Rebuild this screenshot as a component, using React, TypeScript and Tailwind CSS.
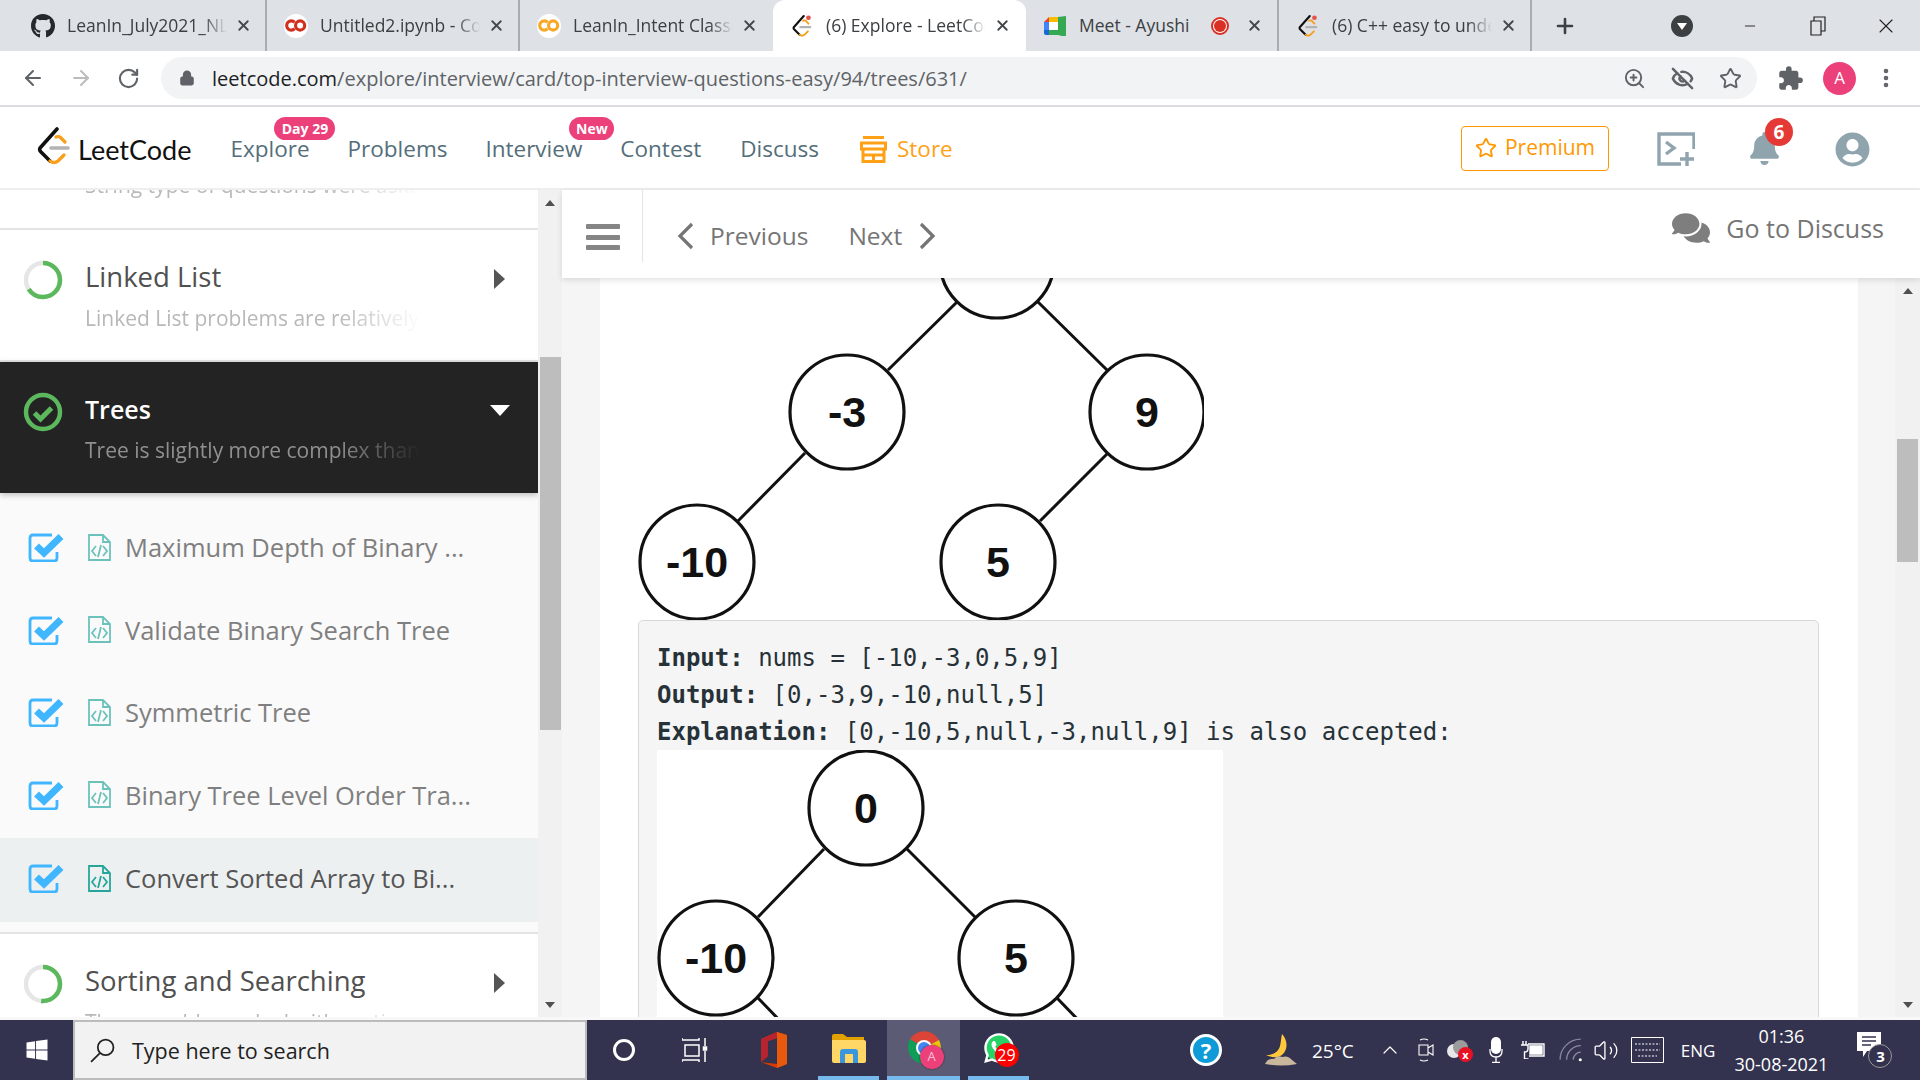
import { ArrowLeft, ArrowRight, ChevronUp, EyeOff, Lock, Minus, MoreVertical, Plus, RotateCw, Star, Volume2, X, ZoomIn } from "lucide-react";
import { FaBell, FaComments, FaGithub, FaUserCircle, FaWhatsapp, FaWindows } from "react-icons/fa";
import { MdExtension } from "react-icons/md";

const sans = "font-['Open_Sans',sans-serif]";

function LeetLogo({ small }: { small?: boolean }) {
  return (
    <svg viewBox="0 0 34 38" className={small ? "h-[24px] w-[20px] shrink-0" : "h-[38px] w-[34px] shrink-0"} fill="none" strokeLinecap="round" strokeLinejoin="round">
      <path d="M20 2 3 21q-1 2 1 4l9 9" stroke="#111" strokeWidth="3.6" />
      <path d="M19 10q2-1 4 0l5 5" stroke="#f89f1b" strokeWidth="3.2" />
      <path d="M13 34q4 3 8 0l6-6" stroke="#f89f1b" strokeWidth="3.2" />
      <path d="M14 21h17" stroke="#b3b3b3" strokeWidth="3.6" />
      {small && <circle cx="28" cy="5" r="4" fill="#e5534b" />}
    </svg>
  );
}

function ColabIcon({ color }: { color: string }) {
  return (
    <span className="flex h-[24px] w-[24px] shrink-0 items-center justify-center rounded-full bg-white">
      <svg viewBox="0 0 24 14" className="h-[13px] w-[22px]" fill="none" stroke={color} strokeWidth="3.4">
        <path d="M10.5 3.6a5 5 0 1 0 0 6.8" />
        <circle cx="16.5" cy="7" r="5" />
      </svg>
    </span>
  );
}

function MeetIcon() {
  return (
    <svg viewBox="0 0 24 20" className="h-[20px] w-[24px] shrink-0">
      <path d="M1 6 6 1v5z" fill="#ea4335" />
      <path d="M6 1h9v5H6z" fill="#fbbc04" />
      <path d="M1 6h5v8H1z" fill="#4285f4" />
      <path d="M1 14h5v5H3q-2 0-2-2z" fill="#1967d2" />
      <path d="M6 14h9v5H6z" fill="#34a853" />
      <path d="M15 1v18l8 2V0z" fill="#34a853" />
      <path d="M6 6h9v8H6z" fill="#fff" />
    </svg>
  );
}

type TabProps = { icon: React.ReactNode; title: string; active?: boolean; sep?: boolean; rec?: boolean };

function Tab({ icon, title, active, sep, rec }: TabProps) {
  return (
    <div className={`flex h-[51px] w-[253px] shrink-0 items-center pl-[17px] ${active ? "rounded-t-[12px] bg-white" : ""} ${sep ? "border-r-2 border-r-[#a9acb1]" : ""}`}>
      <span className="flex w-[24px] justify-center">{icon}</span>
      <span className={`ml-[12px] overflow-hidden whitespace-nowrap text-[17.5px] text-[#3c4043] ${rec ? "w-[116px]" : "w-[160px] [mask-image:linear-gradient(to_right,black_85%,transparent)]"}`}>{title}</span>
      {rec && (
        <span className="ml-[16px] flex h-[18px] w-[18px] items-center justify-center rounded-full border-2 border-[#d93025] bg-white">
          <span className="h-[12px] w-[12px] rounded-full bg-[#d93025]" />
        </span>
      )}
      <X size={17} strokeWidth={2.6} className={`${rec ? "ml-[17px]" : "ml-[8px]"} shrink-0 text-[#44474b]`} />
    </div>
  );
}

function TabStrip() {
  return (
    <div className="flex h-[51px] items-center bg-[#dee1e6] pl-[14px]">
      <Tab icon={<FaGithub size={26} className="text-[#24292e]" />} title="LeanIn_July2021_NL" sep />
      <Tab icon={<ColabIcon color="#d32f1e" />} title="Untitled2.ipynb - Colab" sep />
      <Tab icon={<ColabIcon color="#f9a825" />} title="LeanIn_Intent Classification" />
      <Tab icon={<LeetLogo small />} title="(6) Explore - LeetCode" active />
      <Tab icon={<MeetIcon />} title="Meet - Ayushi" sep rec />
      <Tab icon={<LeetLogo small />} title="(6) C++ easy to understand" sep />
      <Plus size={24} strokeWidth={2.6} className="ml-[21px] text-[#3c4043]" />
      <span className="ml-[94px] flex h-[22px] w-[22px] items-center justify-center rounded-full bg-[#3c4043]">
        <span className="mt-[2px] border-x-[5px] border-t-[7px] border-x-transparent border-t-white" />
      </span>
      <Minus size={16} strokeWidth={1.4} className="ml-[49px] text-[#222]" />
      <svg viewBox="0 0 16 20" className="ml-[52px] h-[20px] w-[16px]" fill="none" stroke="#222" strokeWidth="1.2">
        <path d="M1 5h10v14H1z" />
        <path d="M4 5V1h11v14h-4" />
      </svg>
      <X size={24} strokeWidth={1.1} className="ml-[48px] text-[#222]" />
    </div>
  );
}

function AddressBar() {
  return (
    <div className="flex h-[56px] items-center border-b-2 border-b-[#dadce0] bg-white">
      <ArrowLeft size={24} strokeWidth={2} className="ml-[21px] text-[#5f6368]" />
      <ArrowRight size={24} strokeWidth={2} className="ml-[24px] text-[#babcbe]" />
      <RotateCw size={23} strokeWidth={2.2} className="ml-[24px] text-[#5f6368]" />
      <div className="ml-[21px] flex h-[42px] w-[1596px] items-center rounded-full bg-[#f1f3f4]">
        <Lock size={16} fill="#5f6368" strokeWidth={2.4} className="ml-[18px] text-[#5f6368]" />
        <span className="ml-[17px] mt-[1px] whitespace-nowrap text-[20px] text-[#5f6368]">
          <span className="text-[#202124]">leetcode.com</span>/explore/interview/card/top-interview-questions-easy/94/trees/631/
        </span>
        <ZoomIn size={23} strokeWidth={2} className="ml-auto text-[#5f6368]" />
        <EyeOff size={23} strokeWidth={2.6} className="ml-[25px] text-[#5f6368]" />
        <Star size={23} strokeWidth={2} className="ml-[25px] mr-[15px] text-[#5f6368]" />
      </div>
      <MdExtension size={27} className="ml-[20px] text-[#5f6368]" />
      <span className="ml-[19px] flex h-[33px] w-[33px] items-center justify-center rounded-full bg-[#ec407a] text-[17px] text-white">A</span>
      <MoreVertical size={24} strokeWidth={2.6} className="ml-[18px] text-[#5f6368]" />
    </div>
  );
}

function NavLink({ label, className, badge, badgeClass }: { label: string; className: string; badge?: string; badgeClass?: string }) {
  return (
    <span className={`relative text-[22.5px] text-[#546e7a] ${className}`}>
      {label}
      {badge && (
        <span className={`absolute top-[-15px] flex h-[23px] items-center justify-center rounded-full bg-[#ec407a] text-[14px] font-bold text-white ${badgeClass}`}>{badge}</span>
      )}
    </span>
  );
}

function StoreIcon() {
  return (
    <svg viewBox="0 0 27 28" className="ml-[41px] h-[28px] w-[27px]" fill="none" stroke="#ffa116" strokeWidth="3">
      <path d="M3 2.500h21" />
      <path d="M1.500 8h24v6h-24zM3 14v12.500h21V14M3 20h21M13.500 20v6" />
    </svg>
  );
}

function TopNav() {
  return (
    <div className="flex h-[83px] items-center border-b-2 border-b-[#eeeeee] bg-white pt-[3px]">
      <span className="mb-[6px] ml-[37px]"><LeetLogo /></span>
      <span className="ml-[7px] font-['Lato',sans-serif] text-[27px] leading-none text-[#111]">LeetCode</span>
      <NavLink label="Explore" className="ml-[39px]" badge="Day 29" badgeClass="left-[44px] w-[61px]" />
      <NavLink label="Problems" className="ml-[38px]" />
      <NavLink label="Interview" className="ml-[38px]" badge="New" badgeClass="left-[84px] w-[45px]" />
      <NavLink label="Contest" className="ml-[38px]" />
      <NavLink label="Discuss" className="ml-[39px]" />
      <StoreIcon />
      <span className="ml-[10px] text-[22.5px] text-[#ffa116]">Store</span>
      <div className="-mt-[2px] ml-auto flex h-[45px] w-[148px] items-center justify-center gap-[8px] rounded-[4px] border border-[#ff9800] text-[21px] text-[#ff9800]">
        <Star size={22} strokeWidth={2} />
        Premium
      </div>
      <svg viewBox="0 0 38 34" className="ml-[48px] h-[34px] w-[38px]" fill="none" stroke="#90a4ae" strokeWidth="3.4">
        <path d="M37 17V2H2v30h22" />
        <path d="m9 10 8 6-8 6M30 20v14M23 27h14" />
      </svg>
      <div className="relative ml-[53px] h-[34px] w-[30px]">
        <FaBell size={33} className="text-[#90a4ae]" />
        <span className="absolute left-[17px] top-[-14px] flex h-[28px] w-[28px] items-center justify-center rounded-full bg-[#e53935] text-[19px] font-bold leading-none text-white">6</span>
      </div>
      <FaUserCircle size={35} className="ml-[57px] mr-[50px] text-[#90a4ae]" />
    </div>
  );
}

function Ring({ dash }: { dash: number }) {
  return (
    <svg viewBox="0 0 40 40" className="h-[40px] w-[40px] shrink-0" fill="none" strokeWidth="4.5">
      <circle cx="20" cy="20" r="17" stroke="#e6e6e6" />
      <circle cx="20" cy="20" r="17" stroke="#5cb85c" strokeDasharray={`${dash} 200`} transform="rotate(-90 20 20)" />
    </svg>
  );
}

function DoneRing() {
  return (
    <svg viewBox="0 0 40 40" className="h-[40px] w-[40px] shrink-0" fill="none" stroke="#5cb85c">
      <circle cx="20" cy="20" r="17" strokeWidth="4.5" />
      <path d="m11.5 21 6 6 11-11" strokeWidth="5" />
    </svg>
  );
}

function Section({ title, sub, ring, open }: { title: string; sub: string; ring: React.ReactNode; open?: boolean }) {
  return (
    <div className={`flex h-[130px] shrink-0 overflow-hidden pl-[23px] ${open ? "h-[131px] bg-[#232323] shadow-[0_2px_6px_rgba(0,0,0,0.25)] relative" : "bg-white"}`}>
      <div className="mt-[30px]">{ring}</div>
      <div className="ml-[22px] mt-[30px] w-[336px]">
        <div className={`h-[34px] whitespace-nowrap leading-[34px] ${open ? "text-[25px] font-semibold text-white" : "text-[27.5px] text-[#505050]"}`}>{title}</div>
        <div className={`mt-[9px] overflow-hidden whitespace-nowrap text-[21px] leading-[30px] [mask-image:linear-gradient(to_right,black_75%,transparent)] ${open ? "text-[#909090]" : "text-[#b8b8b8]"}`}>{sub}</div>
      </div>
      {open ? (
        <span className="ml-[69px] mt-[43px] h-0 border-x-[10px] border-t-[11px] border-x-transparent border-t-white" />
      ) : (
        <span className="ml-[73px] mt-[39px] h-0 border-y-[10px] border-l-[11px] border-y-transparent border-l-[#555555]" />
      )}
    </div>
  );
}

function CheckBoxIcon() {
  return (
    <svg viewBox="0 0 36 30" className="h-[30px] w-[36px] shrink-0" fill="none">
      <path d="M24 3H5Q2 3 2 6v20q0 3 3 3h21q3 0 3-3v-6" stroke="#40b6ff" strokeWidth="2.8" />
      <path d="m8.5 14 7.500 7L33 4.500" stroke="#40b6ff" strokeWidth="7" />
    </svg>
  );
}

function FileCodeIcon({ active }: { active?: boolean }) {
  const c = active ? "#26a69a" : "#6cc2bb";
  return (
    <svg viewBox="0 0 23 27" className="h-[27px] w-[23px] shrink-0" fill="none" stroke={c} strokeWidth="1.8">
      <path d="M1 1h14l7 7v18H1zM15 1v7h7" />
      <path d="m8 12-4 5 4 5M15 12l4 5-4 5M13 11l-3 12" />
    </svg>
  );
}

function Lesson({ label, active }: { label: string; active?: boolean }) {
  return (
    <div className={`flex items-center pl-[28px] ${active ? "mt-[2px] h-[84px] bg-[#edf0f1] pb-[4px]" : "h-[82.500px]"}`}>
      <CheckBoxIcon />
      <span className="ml-[24px]"><FileCodeIcon active={active} /></span>
      <span className={`ml-[14px] whitespace-nowrap text-[25.5px] ${active ? "text-[#555555]" : "text-[#7f7f7f]"}`}>{label}</span>
    </div>
  );
}

function Sidebar() {
  return (
    <div className="flex h-[827px] w-[562px] shrink-0">
      <div className="flex w-[538px] flex-col overflow-hidden bg-white">
        <div className="h-[38px] shrink-0 overflow-hidden pl-[85px]">
          <div className="-mt-[20px] w-[336px] overflow-hidden whitespace-nowrap text-[21px] leading-[30px] text-[#b8b8b8] [mask-image:linear-gradient(to_right,black_70%,transparent)]">String type of questions were asked</div>
        </div>
        <div className="h-[2px] shrink-0 bg-[#e4e4e4]" />
        <Section title="Linked List" sub="Linked List problems are relatively" ring={<Ring dash={70} />} />
        <div className="h-[2px] shrink-0 bg-[#e4e4e4]" />
        <Section title="Trees" sub="Tree is slightly more complex than" ring={<DoneRing />} open />
        <div className="h-[439px] shrink-0 bg-[#fafafa] pt-[13px]">
          <Lesson label="Maximum Depth of Binary ..." />
          <Lesson label="Validate Binary Search Tree" />
          <Lesson label="Symmetric Tree" />
          <Lesson label="Binary Tree Level Order Tra..." />
          <Lesson label="Convert Sorted Array to Bi..." active />
        </div>
        <div className="h-[2px] shrink-0 bg-[#e4e4e4]" />
        <Section title="Sorting and Searching" sub="These problems deal with sorting or" ring={<Ring dash={55} />} />
      </div>
      <ScrollTrack width="w-[24px]" thumbTop={151} thumbHeight={373} />
    </div>
  );
}

// thumb and arrows sit in the track's own flow
function ScrollTrack({ width, thumbTop, thumbHeight }: { width: string; thumbTop: number; thumbHeight: number }) {
  return (
    <div className={`flex h-full shrink-0 flex-col items-center bg-[#f1f1f1] ${width}`}>
      <span className="mt-[10px] h-0 border-x-[5px] border-b-[6px] border-x-transparent border-b-[#505050]" />
      <div className="w-[21px] bg-[#bdbdbd]" style={{ marginTop: thumbTop, height: thumbHeight }} />
      <span className="mb-[9px] mt-auto h-0 border-x-[5px] border-t-[6px] border-x-transparent border-t-[#505050]" />
    </div>
  );
}

function Chevron({ right, className }: { right?: boolean; className: string }) {
  return (
    <svg viewBox="0 0 18 28" className={`h-[28px] w-[18px] shrink-0 ${className}`} fill="none" stroke="#757575" strokeWidth="3.2">
      <path d={right ? "M3 2l12 12L3 26" : "M15 2 3 14l12 12"} />
    </svg>
  );
}

function MainHeader() {
  return (
    <div className="relative flex h-[88px] shrink-0 bg-white text-[#757575] shadow-[0_2px_6px_rgba(0,0,0,0.12)]">
      <div className="ml-[24px] mt-[34px] flex h-[26px] w-[34px] flex-col justify-between">
        <span className="h-[5px] rounded-[1px] bg-[#858585]" />
        <span className="h-[5px] rounded-[1px] bg-[#858585]" />
        <span className="h-[5px] rounded-[1px] bg-[#858585]" />
      </div>
      <span className="ml-[22px] h-[72px] w-px bg-[#e4e4e4]" />
      <Chevron className="ml-[34px] mt-[32px]" />
      <span className="ml-[15px] mt-[27px] text-[24.5px] leading-[38px]">Previous</span>
      <span className="ml-[40px] mt-[27px] text-[24.5px] leading-[38px]">Next</span>
      <Chevron right className="ml-[16px] mt-[32px]" />
      <FaComments size={38} className="ml-auto mt-[19px] text-[#7e7e7e]" />
      <span className="ml-[16px] mr-[36px] mt-[19px] text-[25px] leading-[38px]">Go to Discuss</span>
    </div>
  );
}

function TreeNode({ x, y, label }: { x: number; y: number; label: string }) {
  return (
    <g>
      <ellipse cx={x} cy={y} rx="57" ry="57" fill="#fff" stroke="#111" strokeWidth="3.2" />
      <text x={x} y={y + 15} textAnchor="middle" fontFamily="'Liberation Sans', sans-serif" fontWeight="700" fontSize="43" fill="#111">{label}</text>
    </g>
  );
}

function Line({ d }: { d: string }) {
  return <path d={d} stroke="#111" strokeWidth="3" fill="none" />;
}

function Content() {
  return (
    <div className="h-[739px] w-[1258px] shrink-0 overflow-hidden bg-white">
      <svg viewBox="600 278 1258 342" className="block h-[342px] w-[1258px]">
        <Line d="M957 302 888 370M1038 302l69 68M805 453l-67 68M1107 454l-67 67" />
        <TreeNode x={997} y={261} label="" />
        <TreeNode x={847} y={412} label="-3" />
        <TreeNode x={1147} y={412} label="9" />
        <TreeNode x={697} y={562} label="-10" />
        <TreeNode x={998} y={562} label="5" />
        <rect x="1204" y="340" width="6" height="140" fill="#fff" />
      </svg>
      <div className="ml-[38px] w-[1181px] rounded-[5px] border border-[#d8d8d8] bg-[#f5f5f5] pl-[18px] pt-[19px] font-['DejaVu_Sans_Mono',monospace] text-[24px] leading-[37px] text-[#263238]">
        <div className="whitespace-nowrap"><b>Input:</b> nums = [-10,-3,0,5,9]</div>
        <div className="whitespace-nowrap"><b>Output:</b> [0,-3,9,-10,null,5]</div>
        <div className="whitespace-nowrap"><b>Explanation:</b> [0,-10,5,null,-3,null,9] is also accepted:</div>
        <svg viewBox="657 750 566 300" className="-mt-px block h-[300px] w-[566px] bg-white">
          <Line d="M824 849l-66 68M907 849l68 68M758 998l28 29M1057 998l28 29" />
          <TreeNode x={866} y={808} label="0" />
          <TreeNode x={716} y={958} label="-10" />
          <TreeNode x={1016} y={958} label="5" />
        </svg>
      </div>
    </div>
  );
}

function OfficeIcon() {
  return (
    <svg viewBox="0 0 28 36" className="h-[36px] w-[28px]">
      <path d="M1 7 17 0l10 3v29l-10 4-16-6 16 2V6L8 9v15l-7 6z" fill="#d83b01" />
      <path d="M1 7 17 0v6L8 9v15l-7 6z" fill="#b7232f" />
      <path d="M17 0l10 3v29l-10 4z" fill="#e8590c" />
    </svg>
  );
}

function FolderIcon() {
  return (
    <svg viewBox="0 0 34 30" className="h-[30px] w-[34px]">
      <path d="M0 3q0-2 2-2h9l4 3h17v6H0z" fill="#e3a100" />
      <path d="M0 7h32q2 0 2 2v19q0 2-2 2H2q-2 0-2-2z" fill="#ffd766" />
      <path d="M8 30V19q0-3 3-3h12q3 0 3 3v11h-5v-9h-8v9z" fill="#3a96dd" />
    </svg>
  );
}

function ChromeIcon() {
  return (
    <div className="relative h-[36px] w-[36px]">
      <svg viewBox="0 0 36 36" className="h-[36px] w-[36px]">
        <path d="M18 18 4 9a17 17 0 0 1 29 1z" fill="#db4437" />
        <path d="M18 18 33 10a17 17 0 0 1-8 23z" fill="#f4c20d" />
        <path d="M18 18 25 33A17 17 0 0 1 4 9z" fill="#0f9d58" />
        <circle cx="18" cy="18" r="8" fill="#fff" />
        <circle cx="18" cy="18" r="6" fill="#4285f4" />
      </svg>
      <span className="absolute left-[14px] top-[15px] flex h-[24px] w-[24px] items-center justify-center rounded-full bg-[#ec407a] text-[13px] text-[#fbc2d4] shadow-[0_0_2px_rgba(0,0,0,0.6)]">A</span>
    </div>
  );
}

function WhatsIcon() {
  return (
    <div className="relative h-[34px] w-[34px]">
      <span className="absolute left-[3px] top-[3px] h-[28px] w-[28px] rounded-full bg-[#25d366]" />
      <FaWhatsapp size={34} className="absolute text-white" />
      <span className="absolute left-[13px] top-[12px] flex h-[24px] w-[24px] items-center justify-center rounded-full bg-[#ff0000] text-[16px] leading-none text-white">29</span>
    </div>
  );
}

function MoonIcon() {
  return (
    <svg viewBox="0 0 36 36" className="h-[36px] w-[36px]">
      <path d="M20 2c5 5 7 15 0 21-5 3-10 3-16 0 6 0 12-2 14-9 1-4 1-8 2-12z" fill="#ffc83d" />
      <path d="M3 32q3-6 9-5 3-4 8-2 6-2 10 3l5 4q-16 3-32 0z" fill="#c9b79c" />
    </svg>
  );
}

function SlotIcon({ w, ml, children, className }: { w: string; ml: string; children: React.ReactNode; className?: string }) {
  return <div className={`flex h-full shrink-0 items-center justify-center ${w} ${ml} ${className ?? ""}`}>{children}</div>;
}

function Taskbar() {
  return (
    <div className="flex h-[60px] bg-[#33324f] text-white">
      <SlotIcon w="w-[73px]" ml=""><FaWindows size={24} /></SlotIcon>
      <div className="flex w-[514px] shrink-0 items-center border-2 border-[#bcbcbc] bg-[#f2f2f2] text-[21.5px] text-[#222]">
        <svg viewBox="0 0 24 24" className="ml-[15px] h-[25px] w-[25px]" fill="none" stroke="#222" strokeWidth="1.7">
          <circle cx="15" cy="9" r="7.5" />
          <path d="M9.500 14.500 1 23" />
        </svg>
        <span className="ml-[17px] mt-[3px]">Type here to search</span>
      </div>
      <SlotIcon w="w-[73px]" ml=""><span className="h-[22px] w-[22px] rounded-full border-[3px] border-white" /></SlotIcon>
      <SlotIcon w="w-[70px]" ml="">
        <svg viewBox="0 0 26 26" className="h-[26px] w-[26px]" fill="none" stroke="#fff" strokeWidth="1.5">
          <path d="M0 3h17v-2M0 3V1M3 8h14v11H3zM0 23h17v2M0 23v2M23 1v8M23 14v11" />
          <path d="M21.500 10h3v3h-3z" fill="#fff" />
        </svg>
      </SlotIcon>
      <SlotIcon w="w-[88px]" ml=""><OfficeIcon /></SlotIcon>
      <SlotIcon w="w-[61px]" ml="" className="border-b-[4px] border-b-[#76b9ed]"><FolderIcon /></SlotIcon>
      <SlotIcon w="w-[73px]" ml="ml-[8px]" className="border-b-[4px] border-b-[#76b9ed] bg-[#5c5b75]"><ChromeIcon /></SlotIcon>
      <SlotIcon w="w-[61px]" ml="ml-[8px]" className="border-b-[4px] border-b-[#76b9ed]"><WhatsIcon /></SlotIcon>
      <SlotIcon w="w-[32px]" ml="ml-[161px]">
        <span className="flex h-[32px] w-[32px] items-center justify-center rounded-full border-[3px] border-white bg-[#0f9bd7] text-[22px] font-bold leading-none">?</span>
      </SlotIcon>
      <SlotIcon w="w-[36px]" ml="ml-[40px]"><MoonIcon /></SlotIcon>
      <span className="ml-[14px] mt-[2px] self-center text-[19px]">25°C</span>
      <SlotIcon w="w-[24px]" ml="ml-[24px]"><ChevronUp size={24} strokeWidth={1.2} /></SlotIcon>
      <SlotIcon w="w-[24px]" ml="ml-[12px]">
        <svg viewBox="0 0 18 26" className="h-[26px] w-[18px]" fill="none" stroke="#fff" strokeWidth="1.1">
          <path d="M2 8h9v10H2zM11 11l5-3v10l-5-3M3 3q4-2 8 0M3 23q4 2 8 0" />
        </svg>
      </SlotIcon>
      <SlotIcon w="w-[26px]" ml="ml-[9px]">
        <div className="relative h-[24px] w-[26px]">
          <span className="absolute left-0 top-[6px] h-[14px] w-[14px] rounded-full bg-[#e8e8e8]" />
          <span className="absolute left-[6px] top-[2px] h-[15px] w-[15px] rounded-full bg-[#9b9b9b]" />
          <span className="absolute left-[11px] top-[9px] flex h-[15px] w-[15px] items-center justify-center rounded-full bg-[#e81123] text-[11px] font-bold leading-none">x</span>
        </div>
      </SlotIcon>
      <SlotIcon w="w-[26px]" ml="ml-[10px]">
        <svg viewBox="0 0 14 26" className="h-[26px] w-[14px]" fill="none" stroke="#fff" strokeWidth="1.3">
          <rect x="2" y="0" width="10" height="17" rx="5" fill="#fff" stroke="none" />
          <path d="M1 12v2q0 6 6 6t6-6v-2M7 20v5M3 25.400h8" />
        </svg>
      </SlotIcon>
      <SlotIcon w="w-[26px]" ml="ml-[11px]">
        <svg viewBox="0 0 26 18" className="h-[18px] w-[26px]" fill="none" stroke="#fff" strokeWidth="1.4">
          <path d="M3 0v4M6 0v4M1 4h7v4Q8 11 4.500 11v7h4" />
          <path d="M8 3h16v12H9" />
          <path d="M10 5h12v8H10z" fill="#fff" />
        </svg>
      </SlotIcon>
      <SlotIcon w="w-[24px]" ml="ml-[13px]">
        <svg viewBox="0 0 22 22" className="h-[24px] w-[24px]" fill="none" stroke="#8b8a9c" strokeWidth="1.2">
          <path d="M1 20A19 19 0 0 1 20 1M7 20A13 13 0 0 1 20 7M13 20a7 7 0 0 1 7-7" />
          <circle cx="19.500" cy="20" r="1.400" fill="#fff" stroke="none" />
        </svg>
      </SlotIcon>
      <SlotIcon w="w-[26px]" ml="ml-[10px]"><Volume2 size={27} strokeWidth={1.2} /></SlotIcon>
      <SlotIcon w="w-[33px]" ml="ml-[12px]">
        <svg viewBox="0 0 33 26" className="h-[26px] w-[33px]" fill="none" stroke="#fff">
          <path d="M.5.5h32v25H.5z" />
          <path d="M4 7h25M4 13h25M7 19h19" strokeDasharray="2 1.500" strokeWidth="1.2" />
        </svg>
      </SlotIcon>
      <span className="ml-[17px] mt-[1px] self-center text-[17px]">ENG</span>
      <div className="ml-[18px] flex w-[96px] flex-col items-center justify-center whitespace-nowrap text-[18px] leading-[28px]">
        <span>01:36</span>
        <span>30-08-2021</span>
      </div>
      <SlotIcon w="w-[36px]" ml="ml-[28px]">
        <div className="relative h-[36px] w-[36px]">
          <svg viewBox="0 0 26 28" className="h-[28px] w-[26px]">
            <path d="M0 0h24v19H10l-4 6v-6H0z" fill="#fff" />
            <path d="M5 5h14M5 9h14M5 13h9" stroke="#33324f" strokeWidth="1.4" />
          </svg>
          <span className="absolute left-[11px] top-[12px] flex h-[24px] w-[24px] items-center justify-center rounded-full border border-[#999] bg-[#33324f] text-[15px] font-bold leading-none">3</span>
        </div>
      </SlotIcon>
    </div>
  );
}

export default function App() {
  return (
    <div className={`h-[1080px] w-[1920px] overflow-hidden bg-[#f5f5f5] ${sans}`}>
      <TabStrip />
      <AddressBar />
      <TopNav />
      <div className="flex h-[827px]">
        <Sidebar />
        <div className="flex h-[827px] w-[1358px] flex-col">
          <MainHeader />
          <div className="flex h-[739px] bg-[#f5f5f5] pl-[38px]">
            <Content />
            <div className="w-[37px] shrink-0" />
            <ScrollTrack width="w-[25px]" thumbTop={145} thumbHeight={123} />
          </div>
        </div>
      </div>
      <div className="h-[3px] bg-[#f8f8f8]" />
      <Taskbar />
    </div>
  );
}
